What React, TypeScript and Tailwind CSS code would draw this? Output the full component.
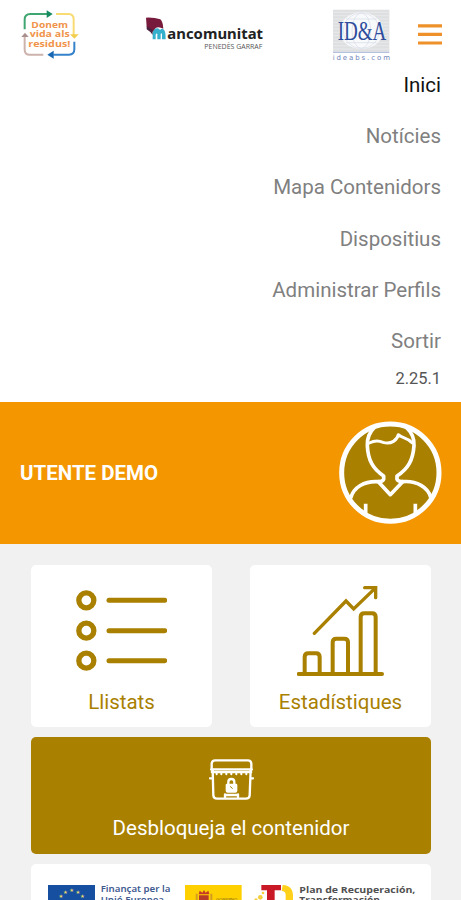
const menu = ['Inici', 'Notícies', 'Mapa Contenidors', 'Dispositius', 'Administrar Perfils', 'Sortir'];

function DonemLogo() {
  return (
    <svg className="h-[50px] w-[58px]" viewBox="0 0 174 150" fill="none" strokeWidth="6">
      <path d="M11 61V32Q11 15 28 15H82" stroke="#3fa571" />
      <path d="M77 4L95 15L77 27Z" fill="#168a61" />
      <path d="M105 15H143Q158 15 158 32V78" stroke="#f8dc72" />
      <path d="M147 76H173L160 89Z" fill="#f3cd4b" />
      <path d="M160 98V121Q160 137 144 137H97" stroke="#3482ca" />
      <path d="M98 125L79 137L98 149Z" fill="#1767b2" />
      <path d="M67 137H26Q11 137 11 122V84" stroke="#ccb3ac" />
      <path d="M1 84L12 71L23 84Z" fill="#a9908c" />
      <g fill="#f0944b" fontFamily="Open Sans, sans-serif" fontWeight="700" fontSize="26">
        <text x="31" y="56" textLength="110" lengthAdjust="spacingAndGlyphs">Donem</text>
        <text x="26" y="85" textLength="120" lengthAdjust="spacingAndGlyphs">vida als</text>
        <text x="22" y="113" textLength="126" lengthAdjust="spacingAndGlyphs">residus!</text>
      </g>
    </svg>
  );
}

function MancomunitatLogo() {
  return (
    <svg className="h-[36px] w-[120px]" viewBox="30 30 360 108">
      <path d="M33 38Q58 37 76 43Q84 51 85 71Q70 63 62 69L54 81L35 65Z" fill="#781a3c" />
      <path d="M35 64L53 74V90Q44 78 35 73Z" fill="#4b2140" />
      <path d="M53 103V86Q54 72 66 70Q73 70 75 75Q83 67 88 76Q92 81 92 103H81V87Q79 83 77 87V103H67V87Q64 83 62 89V103Z" fill="#35b0cc" />
      <text x="97" y="103" textLength="287" lengthAdjust="spacingAndGlyphs" fill="#222" fontFamily="Noto Sans, sans-serif" fontWeight="700" fontSize="45">ancomunitat</text>
      <text x="208" y="132" textLength="174" lengthAdjust="spacingAndGlyphs" fill="#555" fontFamily="Open Sans, sans-serif" fontSize="20">PENEDÈS GARRAF</text>
    </svg>
  );
}

function IdeaLogo() {
  return (
    <svg className="h-[53px] w-[59px]" viewBox="36 26 177 159">
      <path d="M39 28H208V154H39Z" fill="#dedfe1" />
      <path d="M39 36H208M39 46H208M39 56H208M39 66H208M39 76H208M39 86H208M39 96H208M39 106H208M39 116H208M39 126H208M39 136H208M39 146H208" stroke="#e8e9ea" strokeWidth="3" />
      <ellipse cx="124" cy="91" rx="65" ry="55" fill="#f8f9fb" />
      <g fill="none" stroke="#d5dbe6" strokeWidth="2">
        <ellipse cx="124" cy="91" rx="28" ry="53" />
        <ellipse cx="124" cy="91" rx="54" ry="53" />
        <path d="M78 56H170M78 127H170" />
      </g>
      <text x="53" y="120" fontFamily="Liberation Serif, serif" fill="#2e4c9c" fontSize="79" textLength="146" lengthAdjust="spacingAndGlyphs">ID&amp;A</text>
      <path d="M39 156H208" stroke="#a6b5d5" strokeWidth="3" />
      <text x="38" y="179" fontFamily="DejaVu Sans, sans-serif" fontSize="21" fill="#6f84b8" textLength="172">ideabs.com</text>
    </svg>
  );
}

function Avatar() {
  return (
    <svg className="size-[103px]" viewBox="58 63 309 309" fill="none" stroke="#fff" strokeWidth="11" strokeLinecap="round" strokeLinejoin="round">
      <circle cx="212" cy="218" r="146" fill="#a98000" strokeWidth="15" />
      <path d="M164 82C147 99 142 118 143 137C145 181 160 207 192 228V238Q190 245 176 245L212 284L249 245Q235 245 232 238V228C265 207 280 181 283 137C284 118 280 101 261 83" />
      <path d="M149 129C166 120 179 122 190 127C215 135 233 119 236 104C247 115 264 113 277 128" strokeWidth="9" />
      <path d="M176 245C133 242 102 263 94 292M249 245C291 241 326 263 333 292" />
      <path d="M138 311V341M287 311V341" strokeLinecap="butt" />
    </svg>
  );
}

function ListIcon() {
  return (
    <svg className="h-[81px] w-[91px]" viewBox="168 105 273 243" fill="none" stroke="#a98000" strokeLinecap="round">
      {[136, 227, 317].map((y) => (
        <g key={y}>
          <circle cx="199" cy={y} r="22.5" strokeWidth="16" />
          <path d={`M267 ${y}H434`} strokeWidth="15" />
        </g>
      ))}
    </svg>
  );
}

function ChartIcon() {
  return (
    <svg className="h-[90px] w-[87px]" viewBox="172 92 261 270" fill="none" stroke="#a98000" strokeWidth="12" strokeLinecap="round">
      <path d="M177 356H427" />
      <path d="M195 355V305Q195 294 206 294H229Q240 294 240 305V355M279 355V261Q279 250 290 250H314Q325 250 325 261V355M363 355V185Q363 174 374 174H397Q408 174 408 185V355" />
      <path d="M224 234L319 137L342 161L406 99M375 97H408V127" strokeWidth="10" />
    </svg>
  );
}

function ContainerIcon() {
  return (
    <svg className="h-[41px] w-[45px]" viewBox="355 73 135 123" fill="none" stroke="#fff" strokeWidth="7" strokeLinecap="round" strokeLinejoin="round">
      <path d="M363 105V88Q363 77 374 77H471Q482 77 482 88V105" />
      <path d="M362 104H483" />
      <path d="M364 112H481" strokeWidth="8" />
      <path d="M378 116V119M392 116V119M407 116V119M422 116V119M437 116V119M452 116V119M467 116V119" strokeWidth="6" />
      <path d="M366 105L368 182Q369 192 379 192H466Q476 192 477 182L480 105M358 131H367M479 131H487M403 191V179M442 191V179M403 181H442" />
      <path d="M413 150V142Q413 133 422 133Q431 133 431 142V150" strokeWidth="7" />
      <path d="M405 151Q405 147 409 147H436Q440 147 440 151V168Q440 174 434 174H411Q405 174 405 168Z" fill="#fff" stroke="none" />
      <path d="M419 156L425 161" stroke="#a98000" strokeWidth="3" />
    </svg>
  );
}

function FundingLogos() {
  return (
    <svg className="h-9 w-full" viewBox="0 0 1200 108">
      {/* European Union */}
      <path d="M51 63H192V108H51Z" fill="#164fa0" />
      <g fill="#e8dc70" fontSize="16" fontFamily="DejaVu Sans, sans-serif" textAnchor="middle">
        <text x="122" y="85">★</text>
        <text x="103" y="90">★</text>
        <text x="141" y="90">★</text>
        <text x="90" y="103">★</text>
        <text x="154" y="103">★</text>
      </g>
      <g fill="#405a90" fontFamily="Noto Sans, sans-serif" fontWeight="600" fontSize="25">
        <text x="209" y="83" textLength="209" lengthAdjust="spacingAndGlyphs">Finançat per la</text>
        <text x="209" y="116" textLength="190" lengthAdjust="spacingAndGlyphs">Unió Europea</text>
      </g>
      {/* Spanish government */}
      <path d="M462 63H632V108H462Z" fill="#ffd000" />
      <path d="M494 89H500V108H494ZM538 89H544V108H538Z" fill="#d49d22" />
      <path d="M504 94H533V108H504Z" fill="#b83b27" />
      <path d="M503 91L506 80L514 86L519 78L524 86L532 80L535 91Z" fill="#c63b28" />
      <text x="555" y="110" fill="#806718" fontFamily="Open Sans, sans-serif" fontSize="13" textLength="64">GOBIERNO</text>
      {/* Recovery plan */}
      <path d="M691 63H750V79H731V108H708V79H691Z" fill="#c91926" />
      <path d="M755 63C778 63 786 79 786 94V108H764V92Q764 82 752 81Z" fill="#ffd11a" />
      <circle cx="688" cy="100" r="7" fill="#f5ce3f" />
      <circle cx="696" cy="87" r="4" fill="#f5ce3f" />
      <circle cx="675" cy="108" r="5" fill="#f5ce3f" />
      <g fill="#505050" fontFamily="Open Sans, sans-serif" fontWeight="700" fontSize="24">
        <text x="805" y="87" textLength="348" lengthAdjust="spacingAndGlyphs">Plan de Recuperación,</text>
        <text x="805" y="117" textLength="242" lengthAdjust="spacingAndGlyphs">Transformación</text>
      </g>
    </svg>
  );
}

export default function App() {
  return (
    <div className="flex h-[900px] w-[461px] flex-col overflow-hidden bg-[#f1f1f1] font-[Roboto,sans-serif]">
      <div className="h-[401.5px] shrink-0 bg-white">
        <header className="flex h-[60px] items-start">
          <div className="ml-[21px] mt-[9px]"><DonemLogo /></div>
          <div className="ml-[66px] mt-[15px]"><MancomunitatLogo /></div>
          <div className="ml-[67px] mt-[9px]"><IdeaLogo /></div>
          <button className="ml-[27px] mt-6" aria-label="Menu">
            <svg className="h-[21px] w-6" viewBox="0 0 24 21" stroke="#ee912a" strokeWidth="3.2">
              <path d="M0 1.8H24M0 10.4H24M0 19H24" />
            </svg>
          </button>
        </header>
        <nav className="flex flex-col pr-5 text-right text-[20.5px] text-[#808080]">
          {menu.map((item, i) => (
            <a key={item} className={`h-[51.2px] leading-[51.2px] ${i === 0 ? 'text-[#111]' : ''}`}>
              {item}
            </a>
          ))}
        </nav>
        <p className="pr-5 pt-px text-right text-[16.4px] leading-[22px] text-[#555]">2.25.1</p>
      </div>

      <section className="flex h-[142.5px] shrink-0 items-start justify-between bg-[#f39600] pl-5 pr-[19px] pt-[19.5px]">
        <h1 className="pt-px text-[20.5px] font-bold leading-[103px] text-white">UTENTE DEMO</h1>
        <Avatar />
      </section>

      <main className="flex flex-col gap-2.5 pl-[31px] pr-[30px] pt-[21px]">
        <div className="flex justify-between text-[20.5px] text-[#a98000]">
          <div className="flex h-[162px] w-[181px] flex-col items-center rounded-[5px] bg-white pt-[25px]">
            <ListIcon />
            <span className="mt-4 leading-[30px]">Llistats</span>
          </div>
          <div className="flex h-[162px] w-[181px] flex-col items-center rounded-[5px] bg-white pt-[21px]">
            <ChartIcon />
            <span className="mt-[11px] leading-[30px]">Estadístiques</span>
          </div>
        </div>
        <button className="flex h-[117px] flex-col items-center rounded-[5px] bg-[#a98000] pt-[22px] text-[20.5px] text-white">
          <ContainerIcon />
          <span className="mt-[13px] leading-[30px]">Desbloqueja el contenidor</span>
        </button>
        <div className="h-20 overflow-hidden rounded-[5px] bg-white">
          <FundingLogos />
        </div>
      </main>
    </div>
  );
}
